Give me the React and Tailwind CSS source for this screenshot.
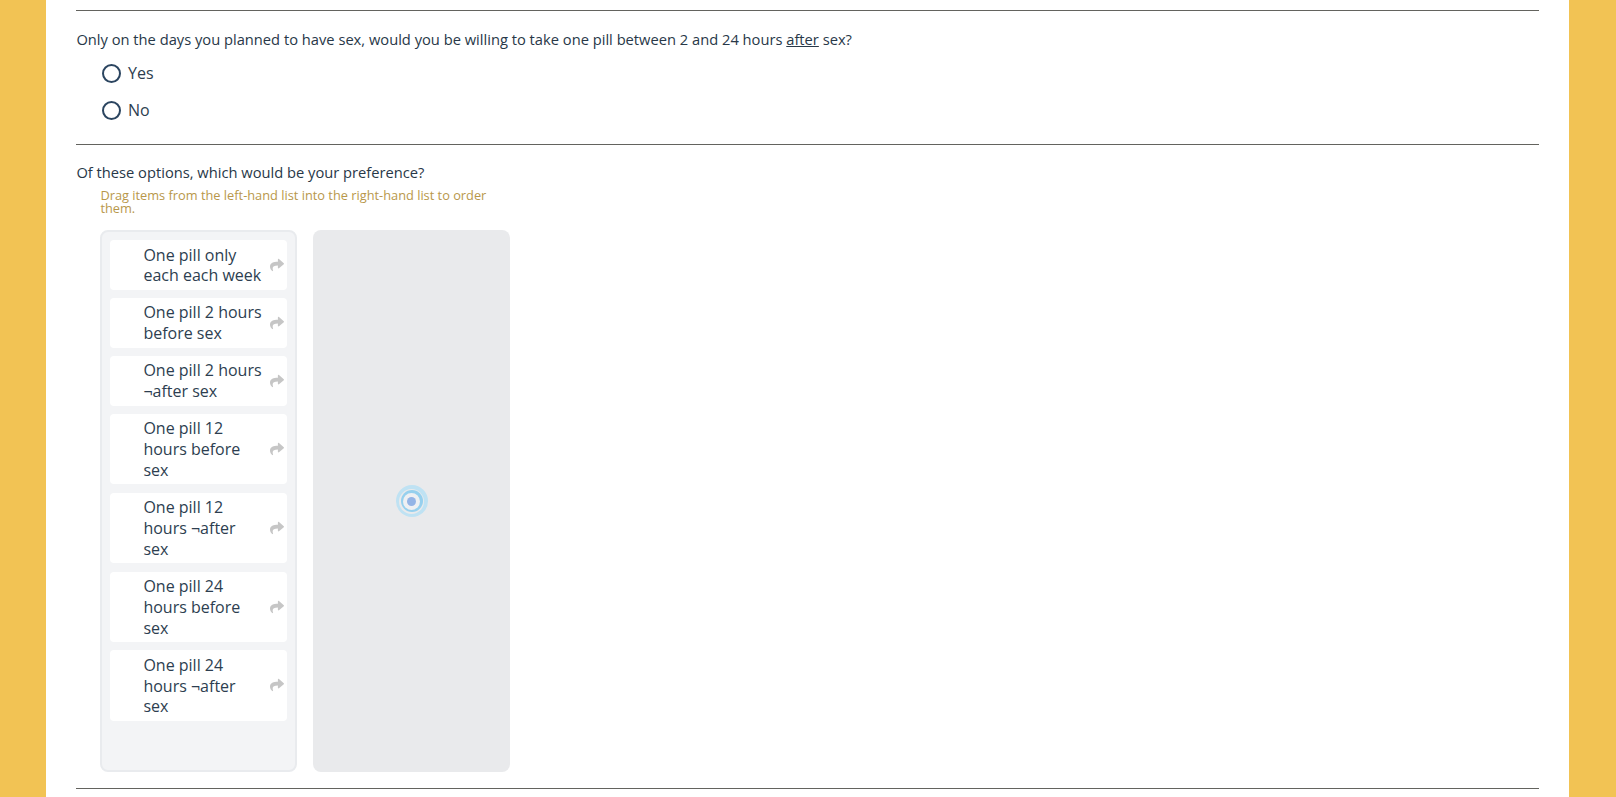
import React from "react";
import { FaShare } from "react-icons/fa";

const items = [
  ["One pill only each each week"],
  ["One pill 2 hours before sex"],
  ["One pill 2 hours ¬after sex"],
  ["One pill 12 hours before sex"],
  ["One pill 12 hours ¬after sex"],
  ["One pill 24 hours before sex"],
  ["One pill 24 hours ¬after sex"],
];

function Radio({ label }) {
  return (
    <div className="flex items-center h-[37px] pl-[26px]">
      <span className="mt-[1px] w-[19px] h-[19px] rounded-full border-2 border-[#2b4560] bg-white" />
      <span className="ml-[7px] text-[16px] text-[#2d3e50]">{label}</span>
    </div>
  );
}

export default function App() {
  return (
    <div className="h-[797px] overflow-hidden bg-[#f2c354] pl-[46px] pr-[47px] text-[#283848]" style={{ fontFamily: '"Open Sans", sans-serif' }}>
      <div className="h-full bg-white px-[30px] pt-[10px]">
        <div className="border-t border-[#63635e] pt-[18px] h-[134px]">
          <p className="pl-[0.4px] text-[14.7px] leading-[21px]">
            Only on the days you planned to have sex, would you be willing to take one pill between 2 and 24 hours <u>after</u> sex?
          </p>
          <div className="mt-[4px]">
            <Radio label="Yes" />
            <Radio label="No" />
          </div>
        </div>
        <div className="border-t border-[#63635e] pt-[17px] h-[644px]">
          <p className="pl-[0.4px] text-[14.7px] leading-[21px]">Of these options, which would be your preference?</p>
          <p className="ml-[24.4px] mt-[6px] w-[400px] text-[12.8px] leading-[13px] text-[#b8974a]">
            Drag items from the left-hand list into the right-hand list to order them.
          </p>
          <div className="ml-[24px] mt-[15px] flex gap-[16px]">
            <div className="w-[197px] h-[542px] rounded-lg border-2 border-[#e9ebee] bg-[#f3f4f6] p-[8px] flex flex-col gap-[8.4px]">
              {items.map(([t]) => (
                <div key={t} className="flex items-center rounded bg-white pl-[33.4px] pr-[3px] pt-[4.5px] pb-[3.5px] text-[16px] leading-[20.8px] text-[#2d3e50]">
                  <span className="w-[120px] shrink-0">{t}</span>
                  <FaShare className="ml-[6.6px] mb-[1px] text-[16px] text-[#c6c6c6]" />
                </div>
              ))}
            </div>
            <div className="w-[197px] h-[542px] rounded-lg bg-[#e9eaec] flex items-center justify-center">
              <div className="w-[32px] h-[32px] rounded-full bg-[#bfe2f3] flex items-center justify-center">
                <div className="w-[25px] h-[25px] rounded-full bg-[#e9eaec] flex items-center justify-center">
                  <div className="w-[22px] h-[22px] rounded-full bg-[#96d0ee] flex items-center justify-center">
                    <div className="w-[17px] h-[17px] rounded-full bg-[#eef0f3] flex items-center justify-center">
                      <div className="w-[9px] h-[9px] rounded-full bg-[#94b4e6]" />
                    </div>
                  </div>
                </div>
              </div>
            </div>
          </div>
        </div>
        <div className="border-t border-[#63635e]" />
      </div>
    </div>
  );
}
